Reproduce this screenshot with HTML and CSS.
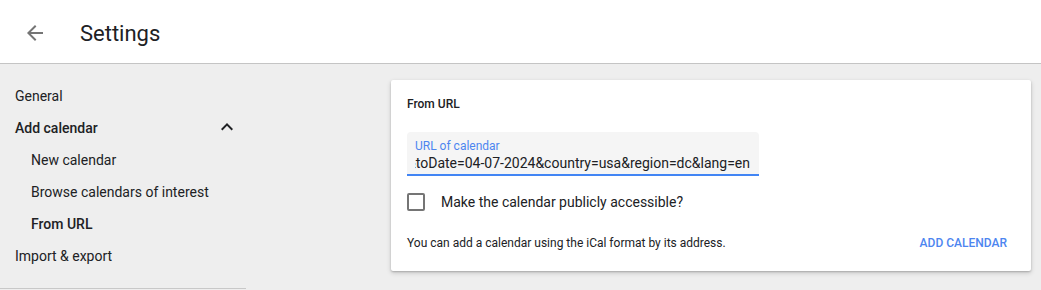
FILE: index.html
```html
<!DOCTYPE html>
<html lang="en">
<head>
<meta charset="utf-8">
<title>Settings</title>
<link rel="stylesheet" href="styles.css">
</head>
<body>
<header class="topbar">
  <span class="back-btn">
    <svg width="24" height="24" viewBox="0 0 24 24"><path d="M20 11H7.83l5.59-5.59L12 4l-8 8 8 8 1.41-1.41L7.83 13H20v-2z" fill="#757575"/></svg>
  </span>
  <h1 class="title">Settings</h1>
</header>
<div class="layout">
  <nav class="sidebar">
    <div class="nav-item">General</div>
    <div class="nav-item nav-bold nav-group">
      <span>Add calendar</span>
      <svg class="chev" width="24" height="24" viewBox="0 0 24 24"><path d="M12 8l-6 6 1.41 1.41L12 10.83l4.59 4.58L18 14z" fill="#202124"/></svg>
    </div>
    <div class="nav-item nav-sub">New calendar</div>
    <div class="nav-item nav-sub">Browse calendars of interest</div>
    <div class="nav-item nav-sub nav-bold">From URL</div>
    <div class="nav-item">Import &amp; export</div>
  </nav>
  <main class="main">
    <section class="card">
      <div class="card-title">From URL</div>
      <div class="field">
        <div class="field-label">URL of calendar</div>
        <div class="field-value"><span>https://www.calendarlabs.com/ical-calendar/holidays?fromDate=01-01-2024&amp;toDate=04-07-2024&amp;country=usa&amp;region=dc&amp;lang=en</span></div>
      </div>
      <label class="check-row">
        <span class="checkbox"></span>
        <span class="check-label">Make the calendar publicly accessible?</span>
      </label>
      <div class="card-footer">
        <span class="hint">You can add a calendar using the iCal format by its address.</span>
        <span class="btn">ADD CALENDAR</span>
      </div>
    </section>
  </main>
</div>
</body>
</html>
```
FILE: styles.css
```css
* { box-sizing: border-box; }
html, body { margin: 0; padding: 0; }
body {
  background: #eeeeee;
  font-family: Roboto, "Noto Sans", Arial, sans-serif;
  color: #202124;
  height: 290px;
  overflow: hidden;
}
.topbar {
  height: 64px;
  background: #fff;
  border-bottom: 1px solid #c4c4c4;
  display: flex;
  align-items: center;
  padding-top: 3px;
}
.back-btn {
  width: 24px;
  height: 24px;
  margin-left: 23px;
  display: flex;
}
.title {
  margin: 2px 0 0 33px;
  font-size: 22px;
  font-weight: 400;
  color: #202124;
  line-height: 28px;
}
.layout {
  display: flex;
  align-items: flex-start;
}
.sidebar {
  width: 246px;
  padding: 16px 0 16px 0;
  border-bottom: 1px solid #c8c8c8;
  flex-shrink: 0;
}
.nav-item {
  height: 32px;
  line-height: 32px;
  font-size: 14px;
  padding-left: 15px;
  color: #202124;
}
.nav-bold { font-weight: 500; }
.nav-sub { padding-left: 31px; }
.nav-group {
  display: flex;
  align-items: center;
  justify-content: space-between;
  padding-right: 7px;
}
.chev { margin-top: -3px; }
.main {
  flex: 1;
  padding: 16px 10px 0 145px;
}
.card {
  background: #fff;
  border-radius: 2px;
  box-shadow: 0 1px 2px rgba(0,0,0,0.2), 0 2px 5px rgba(0,0,0,0.16);
  padding: 16px 16px 10px 16px;
}
.card-title {
  font-size: 12px;
  font-weight: 500;
  line-height: 16px;
  margin-bottom: 20px;
}
.field {
  width: 352px;
  height: 44px;
  background: #f5f5f5;
  border-radius: 4px 4px 0 0;
  border-bottom: 2px solid #4285f4;
  padding: 6px 9px 0 8px;
}
.field-label {
  font-size: 12px;
  line-height: 16px;
  color: #4d85f0;
}
.field-value {
  font-size: 14px;
  line-height: 18px;
  white-space: nowrap;
  overflow: hidden;
  display: flex;
  justify-content: flex-end;
  color: #202124;
}
.field-value span { flex-shrink: 0; }
.check-row {
  display: flex;
  align-items: center;
  height: 32px;
  margin-top: 10px;
}
.checkbox {
  width: 18px;
  height: 18px;
  border: 2px solid #757575;
  border-radius: 2px;
  margin-right: 16px;
}
.check-label {
  font-size: 14px;
  color: #202124;
}
.card-footer {
  display: flex;
  align-items: center;
  justify-content: space-between;
  height: 36px;
  margin-top: 7px;
}
.hint {
  font-size: 12px;
  color: #202124;
}
.btn {
  font-size: 12px;
  font-weight: 500;
  color: #4d85f0;
  padding: 0 8px;
  line-height: 36px;
}
```
